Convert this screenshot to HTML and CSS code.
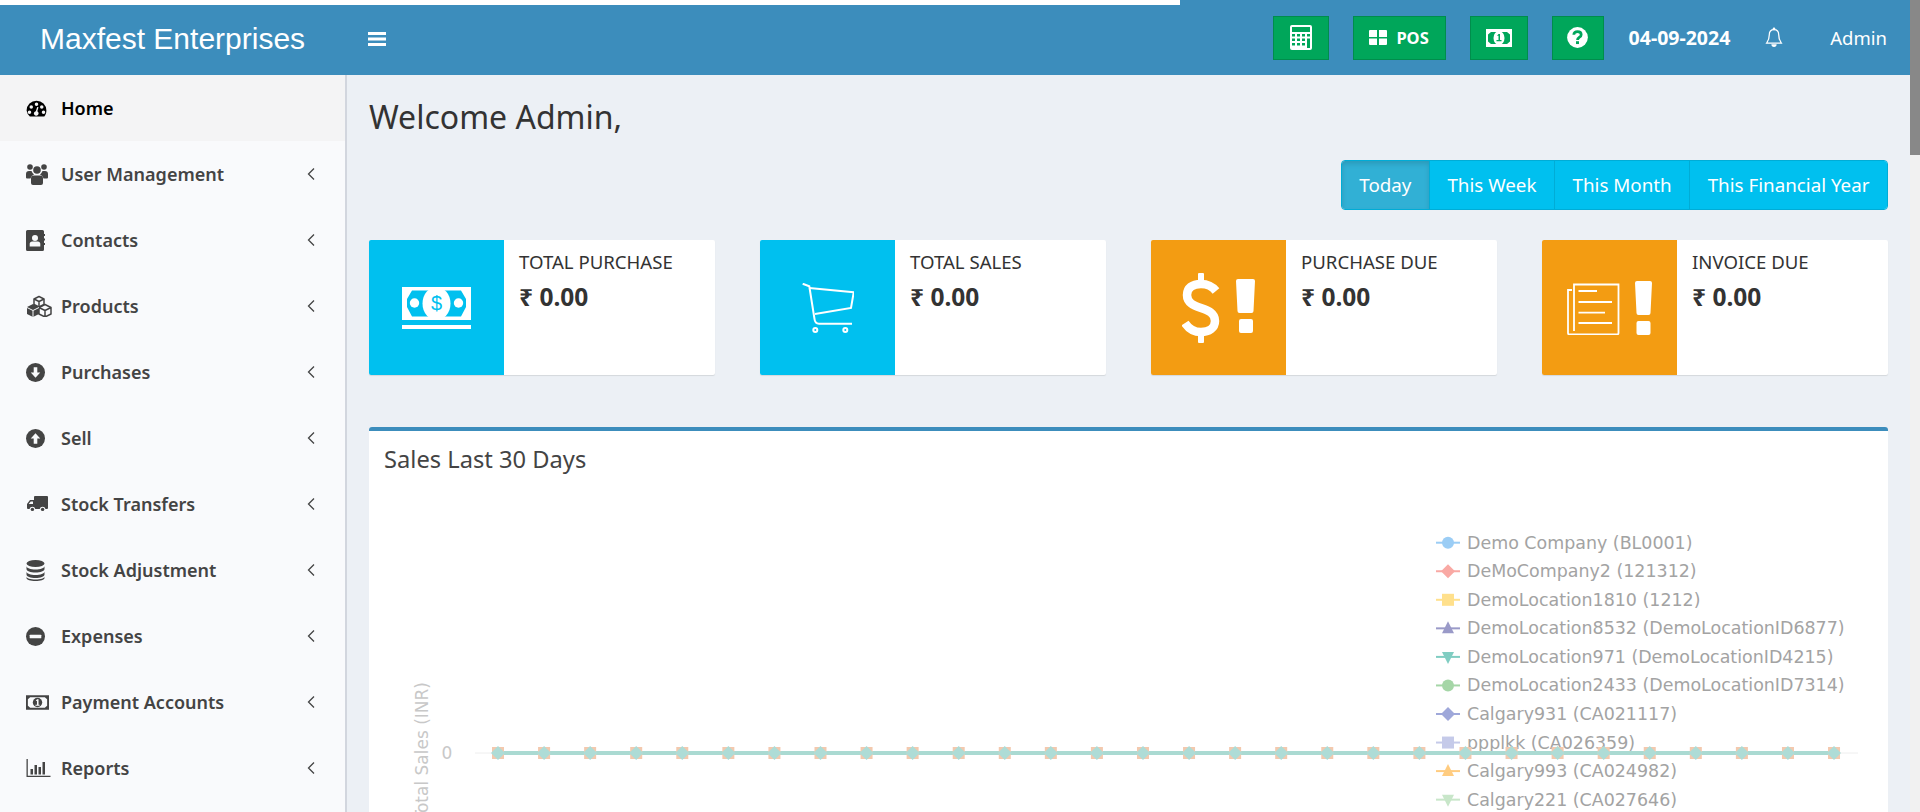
FILE: index.html
```html
<!DOCTYPE html>
<html lang="en">
<head>
<meta charset="UTF-8">
<meta name="viewport" content="width=device-width, initial-scale=1.0">
<title>Maxfest Enterprises</title>
<link rel="stylesheet" href="styles.css">
</head>
<body>

<div class="app">
  <div class="strip"></div>

  <header class="topbar">
    <div class="brand">Maxfest Enterprises</div>
    <a class="toggle" href="#">
      <svg width="20" height="16" viewBox="0 0 20 16"><path fill="#fff" d="M1 1h18v3H1zM1 6.500h18v3H1zM1 12h18v3H1z"/></svg>
    </a>
    <div class="top-actions">
      <a class="btn-green btn-calc" href="#">
        <svg width="22" height="25" viewBox="0 0 22 25"><path fill="#fff" fill-rule="evenodd" d="M2 0h18a2 2 0 0 1 2 2v21a2 2 0 0 1-2 2H2a2 2 0 0 1-2-2V2a2 2 0 0 1 2-2zM2 2v5h18V2zM2 9v2.500h3V9zm5 0v2.500h3V9zm5 0v2.500h3V9zm5 0v2.500h3V9zM2 13.500V16h3v-2.500zm5 0V16h3v-2.500zm5 0V16h3v-2.500zm5 0V23h3v-9.500zM2 18v2.500h3V18zm5 0v2.500h3V18zm5 0v2.500h3V18z"/></svg>
      </a>
      <a class="btn-green btn-pos" href="#">
        <svg width="18" height="15" viewBox="0 0 18 15"><path fill="#fff" d="M0 1q0-1 1-1h7v7H0zM10 0h7q1 0 1 1v6h-8zM0 8.500h8V15H1q-1 0-1-1zM10 8.500h8V14q0 1-1 1h-7z"/></svg>
        <span>POS</span>
      </a>
      <a class="btn-green btn-money" href="#">
        <svg width="26" height="18" viewBox="0 0 26 18"><path fill="#fff" fill-rule="evenodd" d="M0 0h26v18H0zM5 3 2 5.500v7L5 15h16l3-2.500v-7L21 3z"/><ellipse cx="13" cy="9" rx="5.500" ry="7" fill="#fff"/><path fill="#00a65a" d="M12.500 5H14v6h1.500v1.300h-5V11h2V6.700H11z"/></svg>
      </a>
      <a class="btn-green btn-help" href="#">
        <svg width="21" height="21" viewBox="0 0 17 17"><circle cx="8.500" cy="8.500" r="8.400" fill="#fff"/><path fill="none" stroke="#00a65a" stroke-width="2.200" d="M5.500 6.300c0-1.700 1.300-2.500 3-2.500s3 .9 3 2.400c0 1.300-.9 1.800-1.800 2.400-.7.500-1.200.9-1.200 1.900"/><rect x="7.300" y="11.500" width="2.400" height="2.300" fill="#00a65a"/></svg>
      </a>
      <span class="today-date">04-09-2024</span>
      <a class="bell" href="#">
        <svg width="20" height="22" viewBox="0 0 16 21"><path fill="none" stroke="#fff" stroke-width="1.200" d="M8 2.500c3 0 4.500 2.200 4.500 5 0 4 1 6 2.500 8H1c1.500-2 2.500-4 2.500-8 0-2.800 1.500-5 4.500-5z"/><circle cx="8" cy="1.800" r="1.300" fill="#fff"/><path fill="#fff" d="M5.500 16.500h5a2.500 2.500 0 0 1-5 0z"/></svg>
      </a>
      <span class="user-name">Admin</span>
    </div>
  </header>

  <div class="layout">
    <aside class="sidebar">
      <a class="side-item active" href="#">
        <span class="side-icon"><svg width="21" height="17" viewBox="0 1.500 18 14.500"><path fill-rule="evenodd" d="M9 2a8.500 8.500 0 0 1 8.500 8.500c0 2-.7 3.800-1.800 5.200H3.300A8.400 8.400 0 0 1 .5 10.500 8.500 8.500 0 0 1 9 2zM9 3.700a1.500 1.500 0 1 0 0 3 1.500 1.500 0 0 0 0-3zM4.500 6a1.500 1.500 0 1 0 0 3 1.500 1.500 0 0 0 0-3zm9 0a1.500 1.500 0 1 0 0 3 1.500 1.500 0 0 0 0-3zM3 10.500a1.500 1.500 0 1 0 0 3 1.500 1.500 0 0 0 0-3zm12 0a1.500 1.500 0 1 0 0 3 1.500 1.500 0 0 0 0-3zM9.600 7.500 8.400 11a2 2 0 1 0 1.300.2l1-3.500z"/></svg></span>
        <span class="side-label">Home</span>
      </a>
      <a class="side-item" href="#">
        <span class="side-icon"><svg width="22" height="21" viewBox="0 0 22 21"><circle cx="4" cy="3" r="2.800"/><circle cx="18" cy="3" r="2.800"/><circle cx="11" cy="6" r="3.800"/><path d="M0 10q0-3 3-3h2.500q1 2.500 2.500 3.500-3 1-3.500 4H1q-1 0-1-1zM22 10q0-3-3-3h-2.500q-1 2.500-2.500 3.500 3 1 3.500 4H21q1 0 1-1zM8 11.500h6q3 0 3 3V19q0 2-2 2H7q-2 0-2-2v-4.500q0-3 3-3z"/></svg></span>
        <span class="side-label">User Management</span>
        <svg class="chevron" width="8" height="12" viewBox="0 0 8 12"><path fill="none" stroke="currentColor" stroke-width="1.300" d="M7 .5 1.500 6 7 11.500"/></svg>
      </a>
      <a class="side-item" href="#">
        <span class="side-icon"><svg width="19" height="21" viewBox="0 0 19 21"><path fill-rule="evenodd" d="M1.500 0h15Q18 0 18 1.500V4h1v2h-1v2.500h1v2h-1V13h1v2h-1v4.500q0 1.500-1.500 1.500h-15Q0 21 0 19.500v-18Q0 0 1.500 0zM9 5a3 3 0 1 0 0 6 3 3 0 0 0 0-6zM3.700 16.500h10.600v-2.700c0-1.400-1-2.400-2.400-2.400H6.100c-1.400 0-2.400 1-2.400 2.400z"/></svg></span>
        <span class="side-label">Contacts</span>
        <svg class="chevron" width="8" height="12" viewBox="0 0 8 12"><path fill="none" stroke="currentColor" stroke-width="1.300" d="M7 .5 1.500 6 7 11.500"/></svg>
      </a>
      <a class="side-item" href="#">
        <span class="side-icon"><svg width="26" height="22" viewBox="0 0 26 22"><g fill="none" stroke="currentColor" stroke-width="1.500" stroke-linejoin="round"><path d="M13 1.500 18 4v5.500l-5 2.500-5-2.500V4z"/><path d="M8 4l5 2.500L18 4M13 6.500V12"/></g><path d="M1 12l6-3 6 3v7l-6 3-6-3z"/><path fill="none" stroke="currentColor" stroke-width="1.500" stroke-linejoin="round" d="M13 12.500l6-3 6 3v6.500l-6 3-6-3zM13 12.500l6 3 6-3M19 15.500V22"/><path fill="none" stroke="#f9fafc" stroke-width="1" d="M1 12.500l6 3 6-3M7 15.500V22"/></svg></span>
        <span class="side-label">Products</span>
        <svg class="chevron" width="8" height="12" viewBox="0 0 8 12"><path fill="none" stroke="currentColor" stroke-width="1.300" d="M7 .5 1.500 6 7 11.500"/></svg>
      </a>
      <a class="side-item" href="#">
        <span class="side-icon"><svg width="19" height="19" viewBox="0 0 18 18"><circle cx="9" cy="9" r="9"/><path fill="#f9fafc" d="M7.300 4h3.400v5h2.800L9 14 4.500 9h2.800z"/></svg></span>
        <span class="side-label">Purchases</span>
        <svg class="chevron" width="8" height="12" viewBox="0 0 8 12"><path fill="none" stroke="currentColor" stroke-width="1.300" d="M7 .5 1.500 6 7 11.500"/></svg>
      </a>
      <a class="side-item" href="#">
        <span class="side-icon"><svg width="19" height="19" viewBox="0 0 18 18"><circle cx="9" cy="9" r="9"/><path fill="#f9fafc" d="M7.300 14h3.400V9h2.800L9 4 4.500 9h2.800z"/></svg></span>
        <span class="side-label">Sell</span>
        <svg class="chevron" width="8" height="12" viewBox="0 0 8 12"><path fill="none" stroke="currentColor" stroke-width="1.300" d="M7 .5 1.500 6 7 11.500"/></svg>
      </a>
      <a class="side-item" href="#">
        <span class="side-icon truck"><svg width="21" height="16" viewBox="0 0 21 16"><path fill-rule="evenodd" d="M8 0h12q1 0 1 1v11q0 1-1 1h-1.500a3 3 0 0 0-5.800 0H8.300a3 3 0 0 0-5.800 0H1q-1 0-1-1V8l3-4h4V1q0-1 1-1zM3.700 5.500 1.700 8H6V5.500z"/><circle cx="5.400" cy="13.400" r="1.700"/><circle cx="15.600" cy="13.400" r="1.700"/></svg></span>
        <span class="side-label">Stock Transfers</span>
        <svg class="chevron" width="8" height="12" viewBox="0 0 8 12"><path fill="none" stroke="currentColor" stroke-width="1.300" d="M7 .5 1.500 6 7 11.500"/></svg>
      </a>
      <a class="side-item" href="#">
        <span class="side-icon"><svg width="19" height="21" viewBox="0 0 18 21"><ellipse cx="9" cy="3.500" rx="9" ry="3.500"/><path d="M0 6c0 2 4 3.500 9 3.500S18 8 18 6v3c0 2-4 3.500-9 3.500S0 11 0 9zM0 11.500c0 2 4 3.500 9 3.500s9-1.500 9-3.500v3c0 2-4 3.500-9 3.500s-9-1.500-9-3.500zM0 16.500c0 2 4 3 9 3s9-1 9-3v1.500c0 2-4 3-9 3s-9-1-9-3z"/></svg></span>
        <span class="side-label">Stock Adjustment</span>
        <svg class="chevron" width="8" height="12" viewBox="0 0 8 12"><path fill="none" stroke="currentColor" stroke-width="1.300" d="M7 .5 1.500 6 7 11.500"/></svg>
      </a>
      <a class="side-item" href="#">
        <span class="side-icon"><svg width="19" height="19" viewBox="0 0 18 18"><circle cx="9" cy="9" r="9"/><rect x="3.500" y="7.300" width="11" height="3.400" rx=".6" fill="#f9fafc"/></svg></span>
        <span class="side-label">Expenses</span>
        <svg class="chevron" width="8" height="12" viewBox="0 0 8 12"><path fill="none" stroke="currentColor" stroke-width="1.300" d="M7 .5 1.500 6 7 11.500"/></svg>
      </a>
      <a class="side-item" href="#">
        <span class="side-icon"><svg width="23" height="15" viewBox="0 0 22 14"><path fill-rule="evenodd" d="M0 0h22v14H0zM4 2 1.800 4v6L4 12h14l2.200-2V4L18 2z"/><circle cx="11" cy="7" r="4.500"/><path fill="#f9fafc" d="M10.500 4H12v5.200h1v1H9v-1h1.500V5.500H9.300z"/></svg></span>
        <span class="side-label">Payment Accounts</span>
        <svg class="chevron" width="8" height="12" viewBox="0 0 8 12"><path fill="none" stroke="currentColor" stroke-width="1.300" d="M7 .5 1.500 6 7 11.500"/></svg>
      </a>
      <a class="side-item" href="#">
        <span class="side-icon"><svg width="25" height="18" viewBox="0 0 24 18"><path d="M0 0h1.300v16.700H24V18H0zM4 10h2.500v5.500H4zM8 6h2.500v9.500H8zM12 8h2.500v7.500H12zM16 3h2.500v12.500H16z"/></svg></span>
        <span class="side-label">Reports</span>
        <svg class="chevron" width="8" height="12" viewBox="0 0 8 12"><path fill="none" stroke="currentColor" stroke-width="1.300" d="M7 .5 1.500 6 7 11.500"/></svg>
      </a>
    </aside>

    <main class="content">
      <h1 class="welcome">Welcome Admin,</h1>

      <div class="filter-row">
        <div class="btn-group">
          <a class="filter-btn active" href="#">Today</a>
          <a class="filter-btn" href="#">This Week</a>
          <a class="filter-btn" href="#">This Month</a>
          <a class="filter-btn" href="#">This Financial Year</a>
        </div>
      </div>

      <div class="stat-row">
        <div class="stat-box">
          <div class="stat-icon bg-cyan">
            <svg width="69" height="42" viewBox="0 0 69 42"><rect width="69" height="33" fill="#fff"/><path fill="#00c0ef" d="M5 12 10 3.500h18v26H10L5 20zM64 12 59 3.500H41v26h18l5-9.500z"/><ellipse cx="34.500" cy="16.500" rx="14" ry="16.500" fill="#fff"/><circle cx="12.500" cy="16" r="4.700" fill="#fff"/><circle cx="56.500" cy="16" r="4.700" fill="#fff"/><text x="34.500" y="23" text-anchor="middle" class="dollar">$</text><rect y="38" width="69" height="4" fill="#fff"/></svg>
          </div>
          <div class="stat-info">
            <span class="stat-label">TOTAL PURCHASE</span>
            <span class="stat-value">₹ 0.00</span>
          </div>
        </div>
        <div class="stat-box">
          <div class="stat-icon bg-cyan">
            <svg width="52" height="50" viewBox="0 0 52 50"><g fill="none" stroke="#fff" stroke-width="2"><path d="M.7.700 7.300 3.300 12.500 36q.5 4.700 4.500 4.700h33"/><path d="M7.300 5l44.400 4.300L49 25l-36 6"/><circle cx="13.300" cy="47" r="2"/><circle cx="43.300" cy="47" r="2"/></g></svg>
          </div>
          <div class="stat-info">
            <span class="stat-label">TOTAL SALES</span>
            <span class="stat-value">₹ 0.00</span>
          </div>
        </div>
        <div class="stat-box">
          <div class="stat-icon bg-orange">
            <svg width="73" height="70" viewBox="0 0 73 70"><path fill="none" stroke="#fff" stroke-width="8.500" d="M34 18C30 13 25 11 19 11 10 11 5 15 5 22 5 38 33 32 33 48 33 55 27 59 19 59 12 59 7 56 3 50"/><path fill="#fff" d="M16 1q0-1 1-1h4q1 0 1 1v10h-6zM16 59h6v10q0 1-1 1h-4q-1 0-1-1zM56 6h15q2 0 2 2l-1.500 30q0 2-2 2h-12q-2 0-2-2L54 8q0-2 2-2zM59 46h10q2 0 2 2v10q0 2-2 2H59q-2 0-2-2V48q0-2 2-2z"/></svg>
          </div>
          <div class="stat-info">
            <span class="stat-label">PURCHASE DUE</span>
            <span class="stat-value">₹ 0.00</span>
          </div>
        </div>
        <div class="stat-box">
          <div class="stat-icon bg-orange">
            <svg width="86" height="54" viewBox="0 0 86 54"><g fill="none" stroke="#fff" stroke-width="1.800"><path d="M5 9H1v43q0 1.500 1.500 1.500H50q1.500 0 1.500-1.500V3.500H7V50"/><path d="M11.500 10H30M11.500 21H45M11.500 31.700H38M11.500 42H45"/></g><path fill="#fff" d="M70 0h13q2 0 2 2l-1.500 30q0 2-2 2h-10q-2 0-2-2L68 2q0-2 2-2zM71.500 40h10q2 0 2 2v10q0 2-2 2h-10q-2 0-2-2V42q0-2 2-2z"/></svg>
          </div>
          <div class="stat-info">
            <span class="stat-label">INVOICE DUE</span>
            <span class="stat-value">₹ 0.00</span>
          </div>
        </div>
      </div>

      <section class="chart-box">
        <h3 class="chart-title">Sales Last 30 Days</h3>
        <svg class="chart" width="1519" height="400" viewBox="0 0 1519 400">
          <g class="axis-text">
            <text x="78" y="287" text-anchor="middle">0</text>
            <text transform="translate(59,210) rotate(-90)" text-anchor="end">Total Sales (INR)</text>
          </g>
          <line x1="106" x2="1489" y1="281" y2="281" stroke="#eeeeee"/>
          <g id="legend" class="legend-text"></g>
          <g id="markers"></g>
        </svg>
      </section>
    </main>
  </div>
</div>

<div class="scrollbar"><div class="scroll-thumb"></div></div>

<script src="chart.js"></script>
</body>
</html>
```

FILE: chart.js
```js
// Draw the flat sales line and the chart legend
var svgNS = "http://www.w3.org/2000/svg";
var markers = document.getElementById("markers");
var legend = document.getElementById("legend");

function add(parent, tag, attrs, text) {
  var el = document.createElementNS(svgNS, tag);
  for (var k in attrs) el.setAttribute(k, attrs[k]);
  if (text) el.textContent = text;
  parent.appendChild(el);
  return el;
}

var first = 129, step = 46.07, y = 281;
add(markers, "line", { x1: first, x2: first + step * 29, y1: y, y2: y, stroke: "#aadad2", "stroke-width": 4 });
for (var i = 0; i < 30; i++) {
  var x = first + step * i;
  add(markers, "rect", { x: x - 6, y: y - 6, width: 12, height: 12, fill: "#f3c9ae" });
  add(markers, "polygon", { points: x + "," + (y - 7) + " " + (x + 7) + "," + y + " " + x + "," + (y + 7) + " " + (x - 7) + "," + y, fill: "#aedcd6" });
}

var items = [
  ["Demo Company (BL0001)", "#9bcdf5", "circle"],
  ["DeMoCompany2 (121312)", "#f9a9a4", "diamond"],
  ["DemoLocation1810 (1212)", "#ffe08c", "square"],
  ["DemoLocation8532 (DemoLocationID6877)", "#9a9ac8", "up"],
  ["DemoLocation971 (DemoLocationID4215)", "#80cdc2", "down"],
  ["DemoLocation2433 (DemoLocationID7314)", "#a5d6a7", "circle"],
  ["Calgary931 (CA021117)", "#9fa8da", "diamond"],
  ["ppplkk (CA026359)", "#c5cae9", "square"],
  ["Calgary993 (CA024982)", "#ffcc80", "up"],
  ["Calgary221 (CA027646)", "#c8e6c9", "down"]
];

for (var j = 0; j < items.length; j++) {
  var ly = 70.7 + j * 28.55;
  var c = items[j][1], s = items[j][2], lx = 1079;
  add(legend, "line", { x1: lx - 12, x2: lx + 12, y1: ly, y2: ly, stroke: c, "stroke-width": 2 });
  if (s == "circle") add(legend, "circle", { cx: lx, cy: ly, r: 6, fill: c });
  if (s == "square") add(legend, "rect", { x: lx - 6, y: ly - 6, width: 12, height: 12, fill: c });
  if (s == "diamond") add(legend, "polygon", { points: lx + "," + (ly - 7) + " " + (lx + 7) + "," + ly + " " + lx + "," + (ly + 7) + " " + (lx - 7) + "," + ly, fill: c });
  if (s == "up") add(legend, "polygon", { points: lx + "," + (ly - 7) + " " + (lx + 6) + "," + (ly + 5) + " " + (lx - 6) + "," + (ly + 5), fill: c });
  if (s == "down") add(legend, "polygon", { points: lx + "," + (ly + 7) + " " + (lx + 6) + "," + (ly - 5) + " " + (lx - 6) + "," + (ly - 5), fill: c });
  add(legend, "text", { x: lx + 19, y: ly + 6 }, items[j][0]);
}
```

FILE: styles.css
```css
/* Basic reset */
* {
  margin: 0;
  padding: 0;
  box-sizing: border-box;
}

html, body {
  height: 100%;
  overflow: hidden;
}

body {
  font-family: "Noto Sans", "Open Sans", sans-serif;
  font-size: 17px;
  color: #333;
  background: #ecf0f5;
  display: flex;
}

a {
  text-decoration: none;
  color: inherit;
}

.app {
  flex: 1;
  min-width: 0;
  height: 812px;
  display: flex;
  flex-direction: column;
  position: relative;
}

/* White sliver left over the top bar */
.strip {
  position: absolute;
  top: 0;
  left: 0;
  height: 5px;
  width: 1180px;
  background: #fff;
}

/* Top bar */
.topbar {
  height: 75px;
  flex: none;
  background: #3c8dbc;
  display: flex;
  align-items: center;
  padding-right: 23px;
  color: #fff;
}

.brand {
  width: 350px;
  padding: 3px 0 0 40px;
  font-family: "Liberation Sans", Arial, sans-serif;
  font-size: 30px;
}

.toggle {
  display: flex;
  margin: 3px 0 0 17px;
}

.top-actions {
  margin-left: auto;
  display: flex;
  align-items: center;
}

.btn-green {
  height: 44px;
  background: #00a65a;
  border: 1px solid #008d4c;
  display: flex;
  align-items: center;
  justify-content: center;
  margin-right: 24px;
}

.btn-calc { width: 56px; }
.btn-pos { width: 93px; gap: 9px; font-weight: 700; font-size: 16.5px; }
.btn-money { width: 58px; }
.btn-help { width: 52px; margin-right: 25px; }

.today-date {
  font-weight: 700;
  font-size: 19.5px;
  margin-right: 34px;
}

.bell {
  display: flex;
  margin-right: 46px;
}

.user-name {
  font-size: 18.5px;
}

/* Sidebar */
.layout {
  flex: 1;
  display: flex;
  min-height: 0;
}

.sidebar {
  width: 347px;
  flex: none;
  background: #f9fafc;
  border-right: 2px solid #d2d6de;
  color: #444;
}

.side-item {
  height: 66px;
  display: flex;
  align-items: center;
  padding: 0 30px 0 26px;
  font-size: 18px;
  font-weight: 600;
}

.side-item.active {
  background: #f4f4f5;
  color: #000;
}

.side-icon {
  width: 35px;
  flex: none;
  display: flex;
  align-items: center;
}

.side-icon svg {
  fill: currentColor;
  flex: none;
}

.truck {
  padding-left: 1px;
}

.side-label {
  flex: 1;
}

.chevron {
  flex: none;
}

/* Main content */
.content {
  flex: 1;
  min-width: 0;
  padding: 0 22px;
  overflow: hidden;
}

.welcome {
  font-size: 32px;
  font-weight: 400;
  line-height: 36px;
  margin: 24px 0 0;
}

.filter-row {
  display: flex;
  justify-content: flex-end;
  margin-top: 25px;
}

.btn-group {
  display: flex;
  height: 50px;
  border: 1px solid #00acd6;
  border-radius: 4px;
  overflow: hidden;
}

.filter-btn {
  background: #00c0ef;
  color: #fff;
  font-size: 18.8px;
  display: flex;
  align-items: center;
  padding: 0 17.5px;
  border-left: 1px solid #00acd6;
}

.filter-btn:first-child {
  border-left: 0;
}

.filter-btn.active {
  background: #31b0d5;
  box-shadow: inset 0 3px 5px rgba(0, 0, 0, .125);
}

.stat-row {
  display: grid;
  grid-template-columns: repeat(4, 346px);
  justify-content: space-between;
  margin-top: 30px;
}

.stat-box {
  height: 135px;
  background: #fff;
  border-radius: 2px;
  box-shadow: 0 1px 1px rgba(0, 0, 0, .1);
  display: flex;
}

.stat-icon {
  width: 135px;
  flex: none;
  border-radius: 2px 0 0 2px;
  display: flex;
  align-items: center;
  justify-content: center;
}

.bg-cyan { background: #00c0ef; }
.bg-orange { background: #f39c12; }

.stat-info {
  padding: 11px 15px;
  display: flex;
  flex-direction: column;
}

.stat-label {
  font-size: 18.6px;
  line-height: 22px;
}

.stat-value {
  font-size: 24.5px;
  font-weight: 700;
  margin-top: 9px;
  line-height: 30px;
}

.dollar {
  font-family: "Liberation Sans", sans-serif;
  font-size: 20px;
  fill: #00c0ef;
}

/* Chart box */
.chart-box {
  margin-top: 52px;
  background: #fff;
  border-top: 4px solid #3c8dbc;
  border-radius: 3px;
  height: 500px;
}

.chart-title {
  font-size: 23.7px;
  font-weight: 400;
  color: #444;
  padding: 16px 15px 0;
  line-height: 25px;
}

.chart {
  display: block;
}

.axis-text text {
  font-family: "DejaVu Sans", sans-serif;
  font-size: 17px;
  fill: #c8c8c8;
}

.legend-text text {
  font-family: "DejaVu Sans", sans-serif;
  font-size: 17.45px;
  fill: #a3a3a3;
}

/* Fake page scrollbar */
.scrollbar {
  width: 10px;
  flex: none;
  background: #f1f1f1;
}

.scroll-thumb {
  height: 155px;
  background: #888;
}
```
